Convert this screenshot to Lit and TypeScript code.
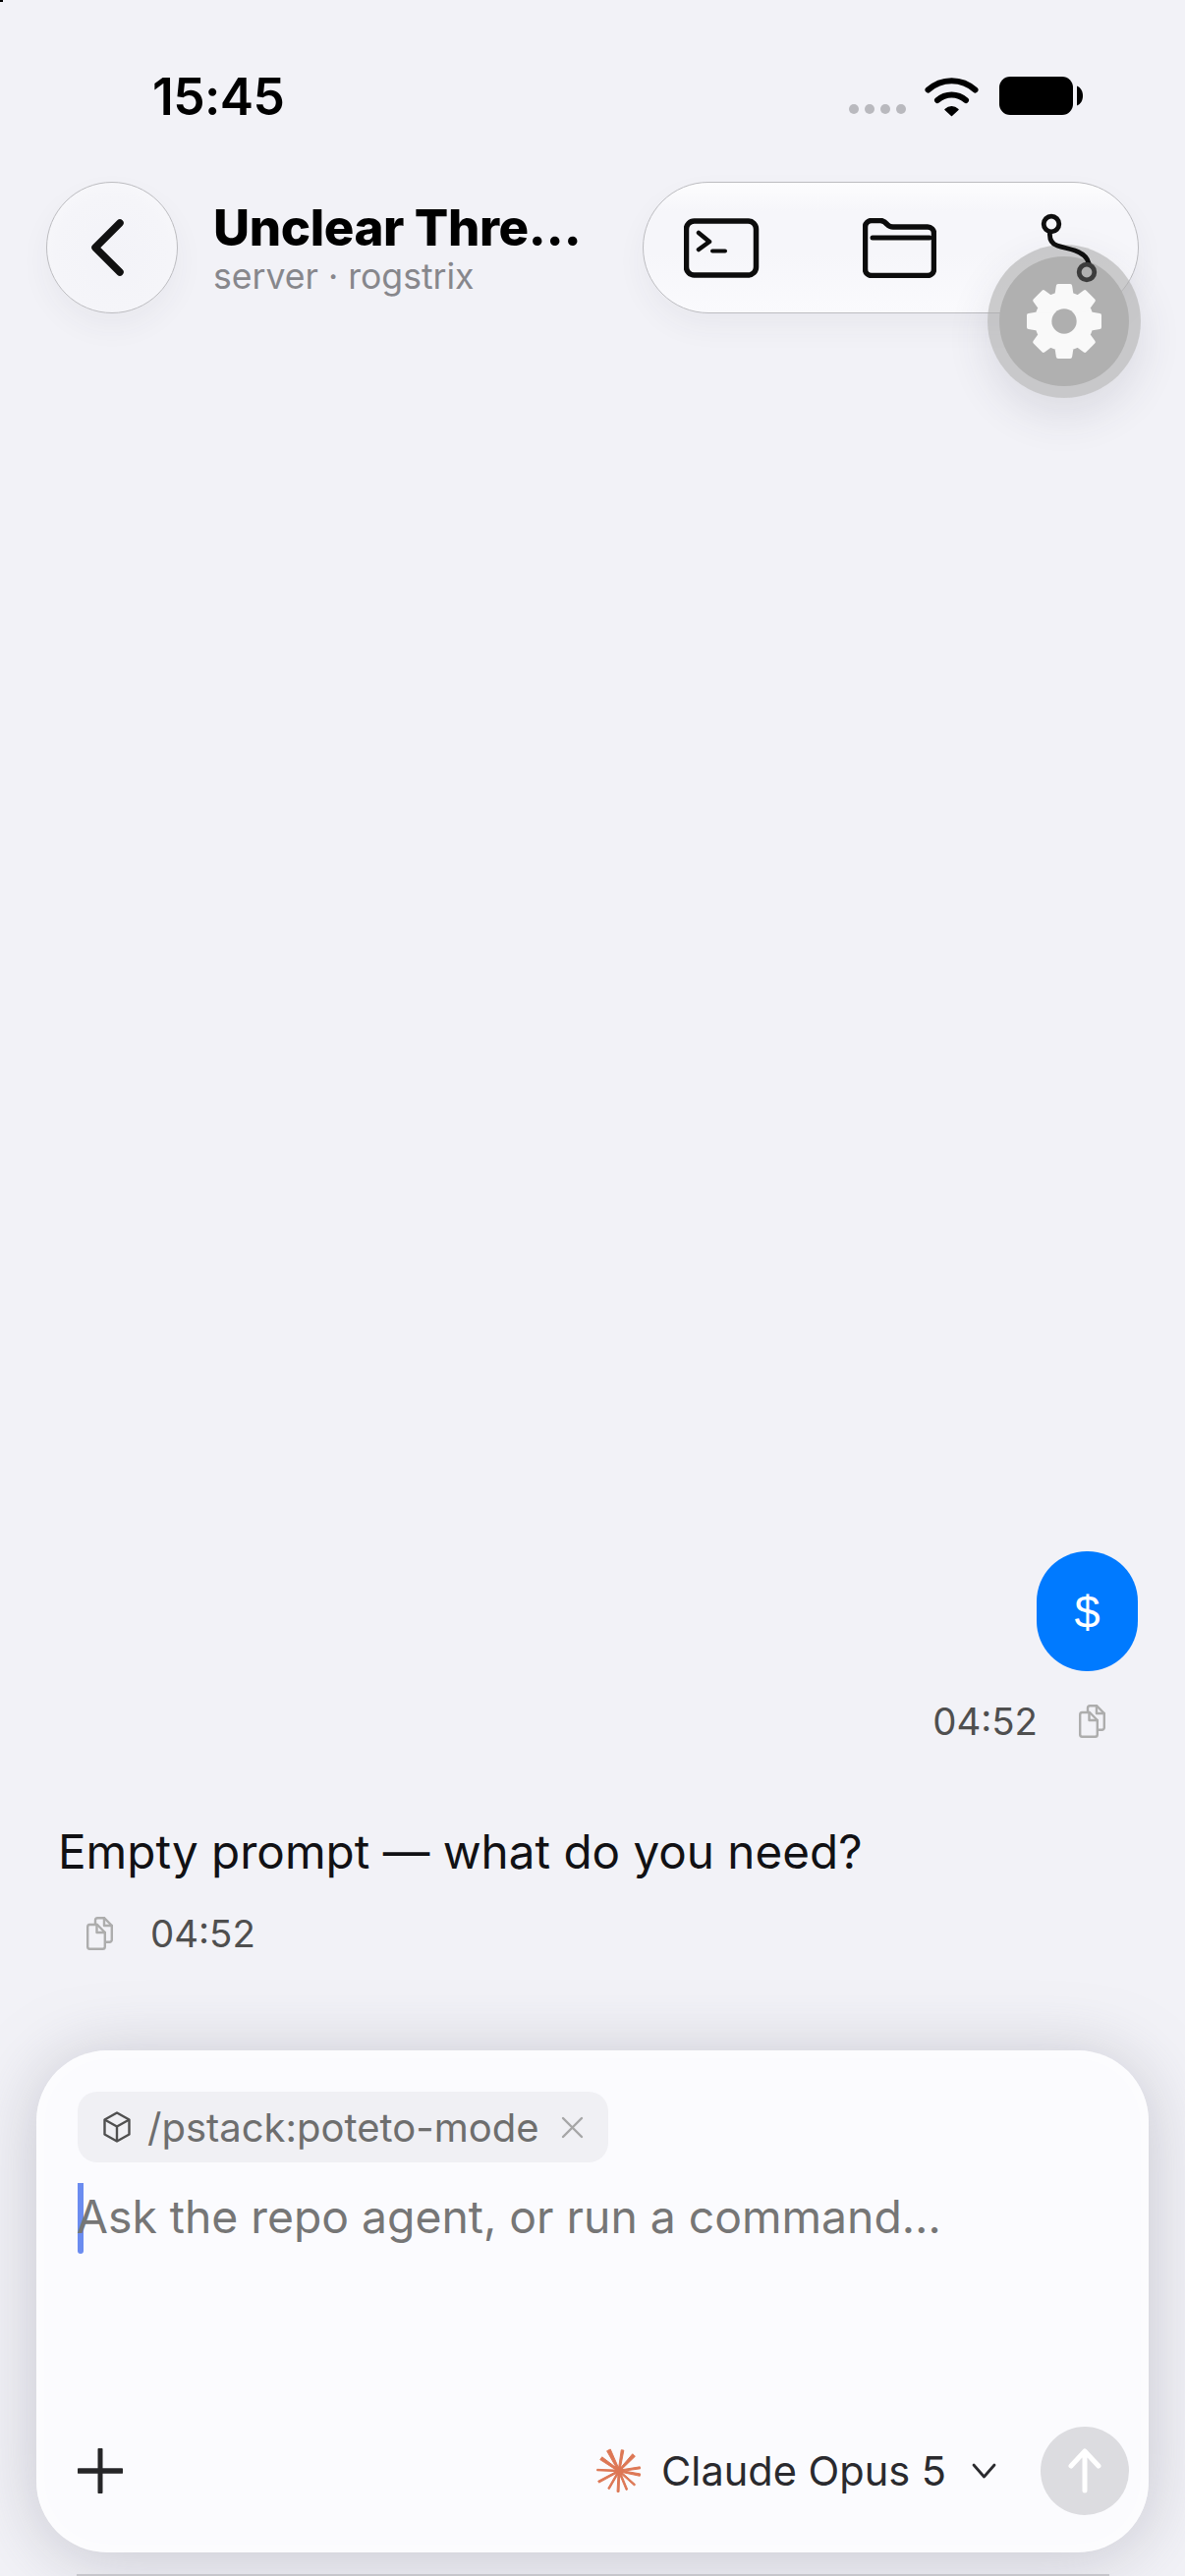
import { LitElement, html, css, svg } from "lit";
import { customElement } from "lit/decorators.js";

const copyIcon = html`<svg class="copy" viewBox="0 0 27 34" fill="none" stroke="#adadad" stroke-width="2.4" stroke-linejoin="round" stroke-linecap="round">
  <path d="M9 7V3.5A2.3 2.3 0 0 1 11.3 1.2H18L25.8 9V23.5A2.3 2.3 0 0 1 23.5 25.8H20"/>
  <path d="M18 1.2V9H25.8"/>
  <path d="M3.3 8H11L18.8 16V30.5A2.3 2.3 0 0 1 16.5 32.8H3.3A2.3 2.3 0 0 1 1.2 30.5V10.3A2.3 2.3 0 0 1 3.3 8Z"/>
  <path d="M10.5 8V16H18.8"/>
</svg>`;

const gearPath = (() => {
  const cx = 40, cy = 40, teeth = 8, ro = 37.5, ri = 29;
  const pts: string[] = [];
  for (let i = 0; i < teeth; i++) {
    const a = (i * 2 * Math.PI) / teeth - Math.PI / 2;
    const w1 = 0.27, w2 = 0.17;
    const p = (r: number, t: number) => `${(cx + r * Math.cos(t)).toFixed(2)} ${(cy + r * Math.sin(t)).toFixed(2)}`;
    pts.push(`${i === 0 ? "M" : "L"}${p(ri, a - w1)}`);
    pts.push(`L${p(ro, a - w2)}`);
    pts.push(`L${p(ro, a + w2)}`);
    pts.push(`L${p(ri, a + w1)}`);
  }
  return pts.join(" ") + " Z";
})();

/* Tips of the Claude spark, relative to its centre, with the outer width of each ray. */
const rays: [number, number, number][] = [
  [-11, -22, 5], [3.7, -22, 3.6], [15.7, -16.7, 4.6], [22.3, -3.3, 3], [22.3, 4.3, 3.4], [16.7, 15, 2.6],
  [8.3, 20, 2.6], [-1, 22.3, 3], [-11, 19, 2.6], [-21.7, 11.7, 3], [-23.3, -1, 2.4], [-19, -13.3, 4.4],
];
const rayPoints = ([x, y, w]: [number, number, number]) => {
  const len = Math.hypot(x, y);
  const nx = -y / len, ny = x / len;
  const e = (w - 1) / 2;
  const tipX = x * 0.96, tipY = y * 0.96;
  return `${(0.8 * nx).toFixed(2)},${(0.8 * ny).toFixed(2)} ${(tipX + e * nx).toFixed(2)},${(tipY + e * ny).toFixed(2)} ${(tipX - e * nx).toFixed(2)},${(tipY - e * ny).toFixed(2)} ${(-0.8 * nx).toFixed(2)},${(-0.8 * ny).toFixed(2)}`;
};

@customElement("app-root")
export class AppRoot extends LitElement {
  static styles = css`
    :host {
      display: block;
      width: 1206px;
      height: 2622px;
      background: #f2f2f7;
      font-family: "Inter", "Liberation Sans", sans-serif;
      overflow: hidden;
    }
    .page {
      position: relative;
      height: 2622px;
      display: flex;
      flex-direction: column;
      overflow: hidden;
    }
    .corner {
      position: absolute;
      left: 0;
      top: 0;
      width: 3px;
      height: 2px;
      background: #000;
    }
    .status {
      height: 185px;
      flex: none;
      box-sizing: border-box;
      display: flex;
      justify-content: space-between;
      align-items: flex-start;
      padding: 68px 104px 0 155px;
    }
    .time {
      font-size: 51.5px;
      font-weight: 600;
      line-height: 60px;
      letter-spacing: -0.6px;
      color: #000;
    }
    .indicators {
      display: flex;
      align-items: flex-start;
      padding-top: 9px;
    }
    .dots {
      display: flex;
      gap: 6px;
      margin-top: 29px;
      margin-right: 19px;
    }
    .dots span {
      width: 10px;
      height: 10px;
      border-radius: 50%;
      background: #b9b9be;
    }
    .wifi { width: 55px; height: 42px; margin-right: 21px; }
    .batt { width: 85px; height: 40px; margin-top: 1px; }
    .header {
      display: flex;
      align-items: center;
      padding: 0 47px;
      height: 134px;
      flex: none;
    }
    .glass {
      box-sizing: border-box;
      border: 1px solid #bcbcc0;
      background: linear-gradient(180deg, #fdfdfe 0%, #f6f6fa 22%, #f6f6fa 55%, #fafafd 100%);
      box-shadow: 0 14px 30px rgba(60, 60, 80, 0.05);
    }
    .back {
      width: 134px;
      height: 134px;
      border-radius: 50%;
      display: flex;
      align-items: center;
      justify-content: center;
      flex: none;
      background: radial-gradient(circle at 50% 55%, #f3f3f8 0%, #f5f5f9 60%, #fbfbfd 100%);
    }
    .back svg { width: 34px; height: 58px; margin-right: 8px; }
    .titles {
      margin-left: 36px;
      width: 392px;
      flex: none;
      display: flex;
      flex-direction: column;
      margin-top: 2px;
    }
    .title {
      font-size: 51px;
      font-weight: 800;
      line-height: 56px;
      letter-spacing: -0.4px;
      color: #000;
      white-space: nowrap;
    }
    .sub {
      font-size: 35.6px;
      line-height: 42px;
      color: #87878c;
      white-space: nowrap;
      margin-top: 1px;
    }
    .tools {
      width: 505px;
      height: 134px;
      border-radius: 67px;
      display: flex;
      align-items: center;
      flex: none;
      margin-left: auto;
      padding: 0 0 0 41px;
    }
    .tools svg { flex: none; }
    .term { width: 77px; height: 61px; }
    .folder { width: 75px; height: 61px; margin-left: 105px; }
    .branch {
      width: 62px;
      height: 72px;
      margin-left: 102px;
      margin-top: 1px;
      position: relative;
      z-index: 3;
    }
    .fab {
      position: absolute;
      z-index: 2;
      left: 1005px;
      top: 249px;
      width: 156px;
      height: 156px;
      border-radius: 50%;
      background: rgba(172, 172, 172, 0.6);
      box-shadow: 0 18px 44px rgba(60, 60, 80, 0.12);
      display: flex;
      align-items: center;
      justify-content: center;
    }
    .fab-in {
      width: 132px;
      height: 132px;
      border-radius: 50%;
      background: #b0b0b0;
      opacity: 0.97;
      display: flex;
      align-items: center;
      justify-content: center;
    }
    .fab svg { width: 78px; height: 78px; }
    .chat {
      flex: 1;
      display: flex;
      flex-direction: column;
      justify-content: flex-end;
      padding: 0 48px 0 60px;
      min-height: 0;
    }
    .bubble {
      align-self: flex-end;
      width: 103px;
      height: 122px;
      border-radius: 51px;
      background: #007aff;
      color: #fff;
      display: flex;
      align-items: center;
      justify-content: center;
      font-size: 47px;
      font-family: "Liberation Sans", sans-serif;
    }
    .meta {
      display: flex;
      align-items: center;
      font-size: 38.4px;
      line-height: 48px;
      color: #4f4f4f;
    }
    .meta.right {
      justify-content: flex-end;
      margin-top: 27px;
      padding-right: 33px;
      gap: 42px;
    }
    .meta.left {
      padding-left: 28px;
      margin-top: 29px;
      gap: 38px;
    }
    .copy { width: 27px; height: 34px; flex: none; }
    .answer {
      margin-top: 79px;
      margin-left: -1px;
      font-size: 47.6px;
      line-height: 60px;
      color: #111114;
      white-space: nowrap;
    }
    .dock {
      flex: none;
      position: relative;
      height: 535px;
      margin-top: 95px;
      padding: 0 37px;
      box-sizing: border-box;
    }
    .line {
      position: absolute;
      left: 78px;
      right: 77px;
      bottom: 0;
      height: 2px;
      background: #c6c6cb;
    }
    .composer {
      box-sizing: border-box;
      position: relative;
      height: 511px;
      border-radius: 72px;
      background: #fbfbfe;
      box-shadow: 0 6px 70px rgba(120, 120, 135, 0.36), inset 0 0 24px rgba(255,255,255,0.8);
      padding: 42px 42px 38px 42px;
      display: flex;
      flex-direction: column;
    }
    .chip {
      align-self: flex-start;
      height: 72px;
      box-sizing: border-box;
      border-radius: 20px;
      background: #f0f0f4;
      display: flex;
      align-items: center;
      padding: 0 25px 0 26px;
      color: #6e6e6e;
      font-size: 40px;
    }
    .chip .cube { width: 28px; height: 32px; margin-right: 17px; }
    .chip .x { width: 23px; height: 23px; margin-left: 22px; }
    .input {
      display: flex;
      align-items: center;
      margin-top: 21px;
      height: 72px;
      font-size: 46.3px;
      color: #767676;
      white-space: nowrap;
    }
    .input span:last-child { margin-top: -4px; margin-left: -3px; }
    .caret {
      width: 6px;
      height: 72px;
      background: #6b8cf0;
      border-radius: 0 0 3px 3px;
      margin-right: -4px;
      flex: none;
    }
    .foot {
      margin-top: auto;
      display: flex;
      align-items: center;
    }
    .plus { width: 46px; height: 46px; flex: none; }
    .model {
      margin-left: auto;
      display: flex;
      align-items: center;
      color: #2a2a2e;
      font-size: 41.5px;
    }
    .spark { width: 50px; height: 50px; margin-right: 18px; }
    .chev { width: 25px; height: 16px; margin-left: 26px; }
    .send {
      width: 90px;
      height: 90px;
      border-radius: 50%;
      background: #dcdce0;
      display: flex;
      align-items: center;
      justify-content: center;
      margin-left: 45px;
      margin-right: -22px;
    }
    .send svg { width: 34px; height: 46px; }
  `;

  render() {
    return html`<div class="page">
      <div class="corner"></div>
      <div class="status">
        <div class="time">15:45</div>
        <div class="indicators">
          <div class="dots"><span></span><span></span><span></span><span></span></div>
          <svg class="wifi" viewBox="0 0 55 42" fill="none" stroke="#000" stroke-linecap="round">
            <path d="M3.500 14.500C17 2 38 2 51.500 14.500" stroke-width="6"/>
            <path d="M13 25C21.500 17.500 33.500 17.500 42 25" stroke-width="6"/>
            <path d="M27.500 40.500L21 34.500C25 30.800 30 30.800 34 34.500Z" fill="#000" stroke="#000" stroke-width="1.500" stroke-linejoin="round"/>
          </svg>
          <svg class="batt" viewBox="0 0 85 40">
            <rect x="0" y="0" width="75" height="39" rx="11" fill="#000"/>
            <path d="M79 9.500C83 11 85 15 85 19.500C85 24 83 28 79 29.500Z" fill="#000"/>
          </svg>
        </div>
      </div>
      <div class="header">
        <div class="back glass">
          <svg viewBox="0 0 34 58" fill="none" stroke="#111" stroke-width="7.500" stroke-linecap="round" stroke-linejoin="round"><path d="M29 4 4 29 29 54"/></svg>
        </div>
        <div class="titles">
          <div class="title">Unclear Thre…</div>
          <div class="sub">server · rogstrix</div>
        </div>
        <div class="tools glass">
          <svg class="term" viewBox="0 0 77 61" fill="none" stroke="#0c0c0c" stroke-linecap="round" stroke-linejoin="round">
            <rect x="2.500" y="3" width="71" height="55" rx="8" stroke-width="5.500"/>
            <path d="M15 15 26 24 15 32" stroke-width="4.500"/>
            <path d="M29 33.500H42" stroke-width="4"/>
          </svg>
          <svg class="folder" viewBox="0 0 75 61" fill="none" stroke="#0c0c0c" stroke-linecap="round" stroke-linejoin="round">
            <path d="M2.500 9A6.500 6.500 0 0 1 9 2.500H18C21.500 2.500 23 4 25 6.500 27 8.700 28.500 9 31 9H66A6.500 6.500 0 0 1 72.500 15.500V52A6.500 6.500 0 0 1 66 58.500H9A6.500 6.500 0 0 1 2.500 52Z" stroke-width="5.500"/>
            <path d="M10 20H68" stroke-width="5"/>
          </svg>
          <svg class="branch" viewBox="0 0 62 72" fill="none" stroke="#0f0f0f" stroke-width="4.800" stroke-linecap="round">
            <circle cx="15" cy="11" r="7.800"/>
            <path d="M13.500 20C13 26 15 31 21 33C27 35 33 36 39 38C46 40.500 51.500 44 53 51"/>
            <circle cx="51" cy="60" r="7.800" stroke="#3c3c3c"/>
          </svg>
        </div>
      </div>
      <div class="fab">
        <div class="fab-in">
          <svg viewBox="0 0 80 80"><path d="${gearPath}" fill="#fbfbfb" stroke="#fbfbfb" stroke-width="4" stroke-linejoin="round"/><circle cx="40" cy="40" r="13" fill="#afafaf"/></svg>
        </div>
      </div>
      <div class="chat">
        <div class="bubble">$</div>
        <div class="meta right"><span>04:52</span>${copyIcon}</div>
        <div class="answer">Empty prompt — what do you need?</div>
        <div class="meta left">${copyIcon}<span>04:52</span></div>
      </div>
      <div class="dock">
        <div class="composer">
          <div class="chip">
            <svg class="cube" viewBox="0 0 28 32" fill="none" stroke="#505050" stroke-width="2.400" stroke-linejoin="round"><path d="M14 1.500 26.500 8.500V23.500L14 30.500 1.500 23.500V8.500Z"/><path d="M1.500 8.500 14 15.500 26.500 8.500M14 15.500V30.500"/></svg>
            <span>/pstack:poteto-mode</span>
            <svg class="x" viewBox="0 0 23 23" stroke="#a6a6a6" stroke-width="2.400" stroke-linecap="round"><path d="M2 2 21 21M21 2 2 21"/></svg>
          </div>
          <div class="input"><span class="caret"></span><span>Ask the repo agent, or run a command…</span></div>
          <div class="foot">
            <svg class="plus" viewBox="0 0 46 46" stroke="#262628" stroke-linecap="round"><path d="M1.500 23H44.500" stroke-width="5.500"/><path d="M23 1.500V44.500" stroke-width="5"/></svg>
            <div class="model">
              <svg class="spark" viewBox="-25 -25 50 50" fill="#dd7755" stroke="#dd7755" stroke-width="1" stroke-linejoin="round">
                <circle cx="0" cy="0" r="4.500" stroke="none"/>
                ${rays.map((r) => svg`<polygon points=${rayPoints(r)}/>`)}
              </svg>
              <span>Claude Opus 5</span>
              <svg class="chev" viewBox="0 0 25 16" fill="none" stroke="#2a2a2e" stroke-width="2.800" stroke-linecap="round" stroke-linejoin="round"><path d="M2 2 12.500 14 23 2"/></svg>
            </div>
            <div class="send">
              <svg viewBox="0 0 34 46" fill="none" stroke="#fff" stroke-width="5" stroke-linecap="round" stroke-linejoin="round"><path d="M17 43V3M3 18 17 3 31 18"/></svg>
            </div>
          </div>
        </div>
        <div class="line"></div>
      </div>
    </div>`;
  }
}
